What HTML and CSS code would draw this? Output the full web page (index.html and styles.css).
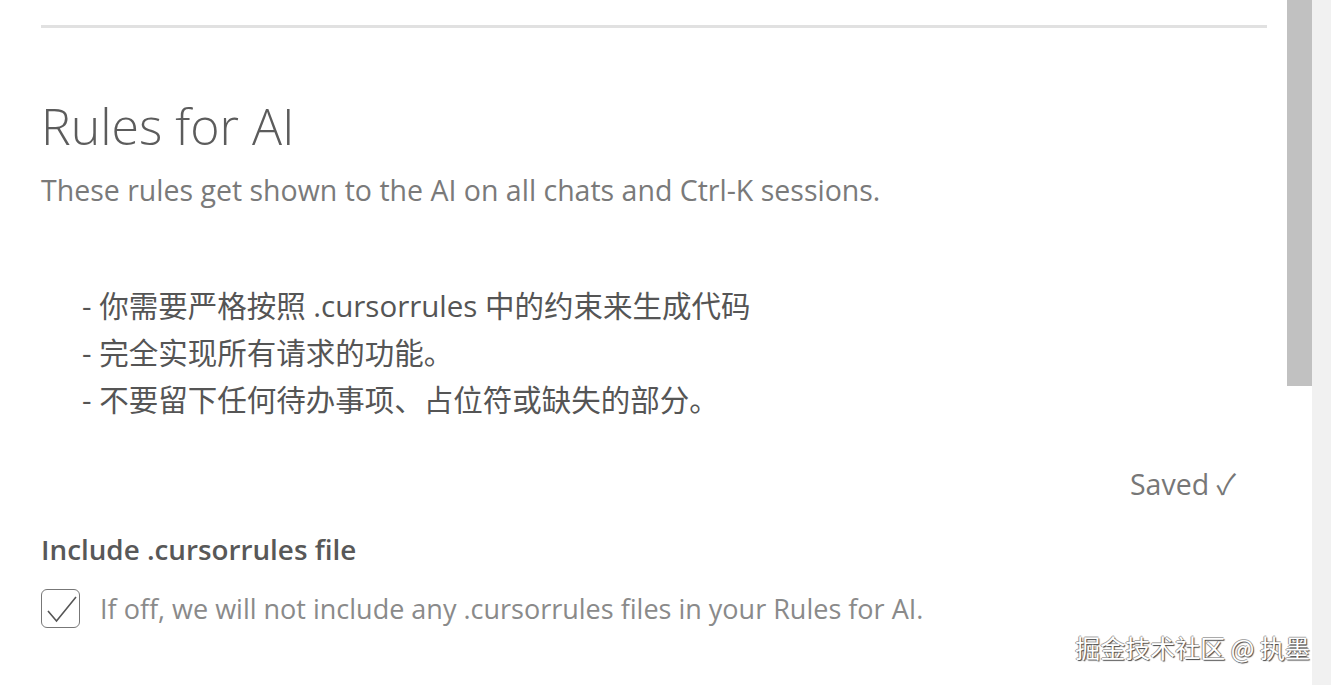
FILE: index.html
```html
<!DOCTYPE html>
<html lang="en">
<head>
    <meta charset="UTF-8">
    <meta name="viewport" content="width=device-width, initial-scale=1.0">
    <title>Rules for AI</title>
    <link rel="stylesheet" href="styles.css">
</head>
<body>
    <div class="window">
        <div class="settings">
            <hr class="divider">

            <h1 class="title">Rules for AI</h1>
            <p class="subtitle">These rules get shown to the AI on all chats and Ctrl-K sessions.</p>

            <div class="rules">
                <div class="rule">- 你需要严格按照 .cursorrules 中的约束来生成代码</div>
                <div class="rule">- 完全实现所有请求的功能。</div>
                <div class="rule">- 不要留下任何待办事项、占位符或缺失的部分。</div>
            </div>

            <div class="status">Saved ✓</div>

            <h2 class="option-title">Include .cursorrules file</h2>
            <label class="option">
                <span class="checkbox">
                    <svg width="36" height="36" viewBox="0 0 36 36">
                        <path d="M5 20 L13.5 30 L33 6" fill="none" stroke="#555" stroke-width="1.6"/>
                    </svg>
                </span>
                <span class="option-text">If off, we will not include any .cursorrules files in your Rules for AI.</span>
            </label>
        </div>
        <div class="scrollbar">
            <div class="thumb"></div>
        </div>
        <div class="side"></div>

        <div class="watermark">掘金技术社区 @ 执墨</div>
    </div>
</body>
</html>
```

FILE: styles.css
```css
body {
    margin: 0;
    padding: 0;
    background: #fff;
    font-family: "Open Sans", "Noto Sans CJK SC", sans-serif;
}

.window {
    position: relative;
    display: flex;
    height: 685px;
    overflow: hidden;
}

.settings {
    flex: 1;
    padding: 0 20px 0 41px;
}

.divider {
    margin: 25px 0 0 0;
    border: none;
    border-top: 3px solid #e1e1e1;
}

.title {
    margin: 66px 0 0 0;
    font-size: 50px;
    font-weight: 300;
    color: #5c5c5c;
    line-height: 64px;
}

.subtitle {
    margin: 12px 0 0 0;
    font-size: 28.5px;
    color: #7a7a7a;
    line-height: 40px;
}

.rules {
    margin-top: 72px;
    padding-left: 41px;
}

.rule {
    font-size: 29.5px;
    line-height: 47px;
    color: #555;
}

.status {
    margin-top: 39px;
    padding-right: 31px;
    text-align: right;
    font-size: 28.5px;
    color: #777;
}

.option-title {
    margin: 27px 0 0 0;
    font-size: 27.8px;
    font-weight: 600;
    color: #585858;
}

.option {
    display: flex;
    align-items: center;
    gap: 20px;
    margin-top: 21px;
}

.checkbox {
    display: flex;
    justify-content: center;
    align-items: center;
    width: 37px;
    height: 37px;
    border: 1.5px solid #777;
    border-radius: 6px;
}

.option-text {
    font-size: 27px;
    color: #8a8a8a;
}

.scrollbar {
    width: 25px;
}

.thumb {
    height: 386px;
    background: #c1c1c1;
}

.side {
    width: 19px;
    background: #f1f1f1;
}

.watermark {
    position: absolute;
    right: 21px;
    bottom: 20px;
    font-family: "Noto Sans CJK SC", sans-serif;
    font-size: 25px;
    color: #fff;
    text-shadow: 1px 1px 1px #444, -1px 0 0 #999, 0 -1px 0 #aaa;
}
```
